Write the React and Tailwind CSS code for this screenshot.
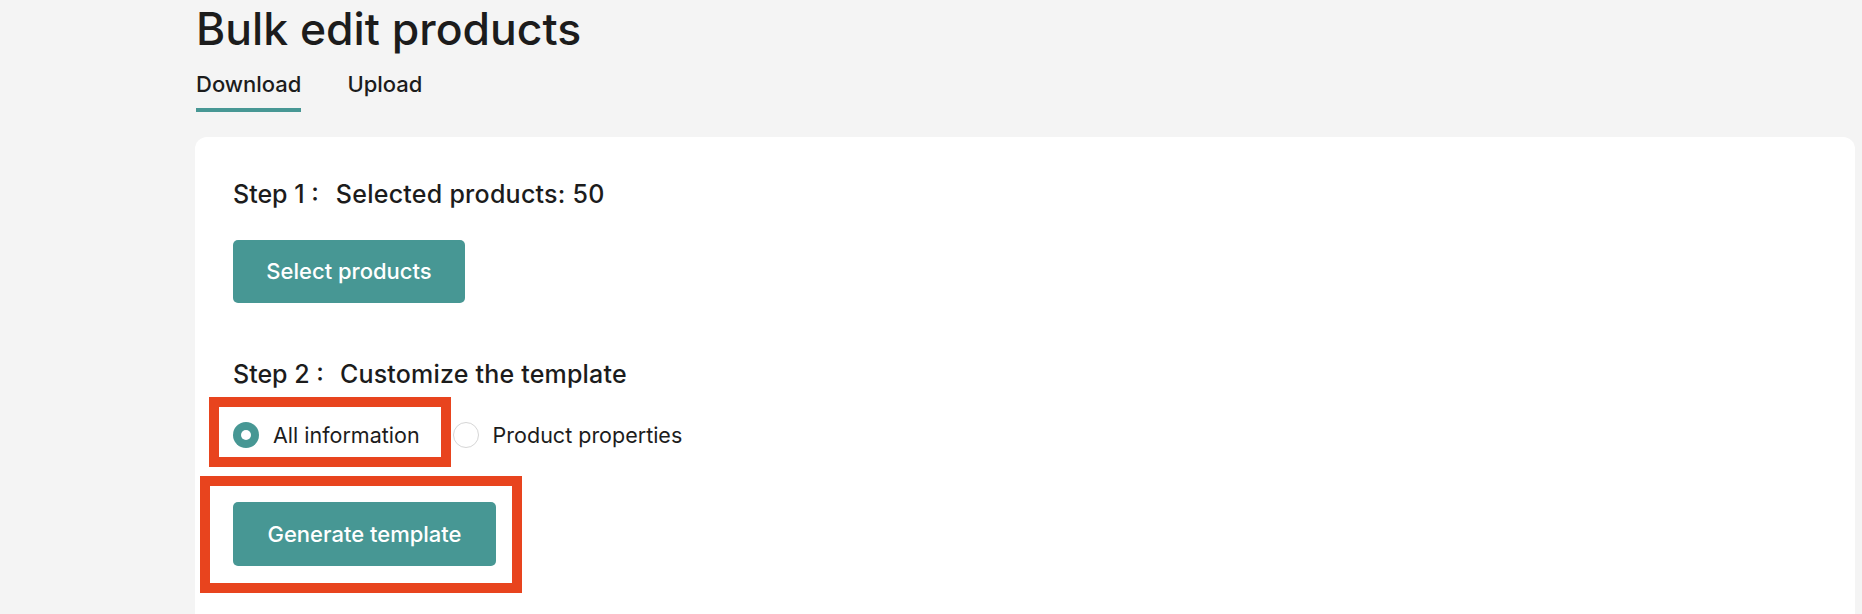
import React, { useState } from 'react';

const teal = 'bg-[#479794]';

const Radio = ({ checked, label, onClick }) => (
  <button type="button" onClick={onClick} className="flex items-center gap-[14px] cursor-pointer">
    {checked ? (
      <span className="flex h-[26px] w-[26px] items-center justify-center rounded-full bg-[#479794]">
        <span className="h-[10px] w-[10px] rounded-full bg-white" />
      </span>
    ) : (
      <span className="h-[26px] w-[26px] rounded-full border border-[#d6d6d6] bg-white" />
    )}
    <span className="text-[21.5px] leading-[26px] text-[#1c1c1c]">{label}</span>
  </button>
);

const App = () => {
  const [tab, setTab] = useState('download');
  const [mode, setMode] = useState('all');

  return (
    <div className="min-h-screen bg-[#f4f4f4] pl-[195px] pr-[7px] pt-[7px] font-['Inter',sans-serif] text-[#1c1c1c]">
      <h1 className="pl-[1px] text-[44.5px] leading-[44px] font-medium">Bulk edit products</h1>

      {/* Tabs */}
      <div className="mt-[22px] flex gap-[46px] pl-[1px]">
        {[
          ['download', 'Download'],
          ['upload', 'Upload'],
        ].map(([key, text]) => (
          <button
            key={key}
            type="button"
            onClick={() => setTab(key)}
            className={`pb-[13px] text-[22px] leading-[22px] font-medium border-b-4 ${
              tab === key ? 'border-[#479794]' : 'border-transparent'
            }`}
          >
            {text}
          </button>
        ))}
      </div>

      {/* Card */}
      <div className="mt-[25px] rounded-[12px] bg-white pl-[38px] pt-[41px] pb-[80px]">
        <p className="text-[25px] leading-[32px] font-medium">
          Step 1 :<span className="ml-[17px] tracking-[0.25px]">Selected products: 50</span>
        </p>
        <button
          type="button"
          className={`mt-[30px] h-[63px] w-[232px] rounded-[5px] ${teal} text-[22px] font-medium text-white`}
        >
          Select products
        </button>

        <p className="mt-[55px] text-[25px] leading-[32px] font-medium">
          Step 2 :<span className="ml-[16px] tracking-[0.2px]">Customize the template</span>
        </p>

        <div className="mt-[32px] flex items-center gap-[33px]">
          <div className="relative">
            <Radio checked={mode === 'all'} label="All information" onClick={() => setMode('all')} />
            <span className="pointer-events-none absolute -left-[24px] -right-[31px] -top-[25px] -bottom-[19px] border-[10px] border-[#e8441e]" />
          </div>
          <Radio checked={mode === 'props'} label="Product properties" onClick={() => setMode('props')} />
        </div>

        <div className="relative mt-[54px] w-fit">
          <button
            type="button"
            className={`h-[64px] w-[263px] rounded-[5px] ${teal} text-[22px] font-medium text-white`}
          >
            Generate template
          </button>
          <span className="pointer-events-none absolute -left-[33px] -right-[26px] -top-[26px] -bottom-[27px] border-[10px] border-[#e8441e]" />
        </div>
      </div>
    </div>
  );
};

export default App;
